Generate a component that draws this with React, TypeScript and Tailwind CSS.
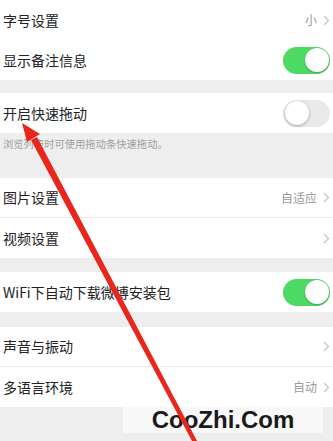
import React from 'react';

const font = { fontFamily: '"Noto Sans CJK SC", "Noto Sans", sans-serif' };

const Chevron = () => (
  <svg width="7" height="11" viewBox="0 0 7 11" className="ml-[6px]">
    <path d="M1 1l4.5 4.5L1 10" fill="none" stroke="#c4c4c8" strokeWidth="1.2" />
  </svg>
);

const Toggle = ({ on }: { on: boolean }) =>
  on ? (
    <div className="w-[47px] h-[27px] rounded-full bg-[#4cd964] flex items-center justify-end px-[1.5px]">
      <div className="w-[24px] h-[24px] rounded-full bg-white shadow-[0_1px_2px_rgba(0,0,0,0.25)]" />
    </div>
  ) : (
    <div className="w-[47px] h-[27px] rounded-full bg-[#e9e9ea] flex items-center px-[1.5px]">
      <div className="w-[24px] h-[24px] rounded-full bg-white shadow-[0_1px_3px_rgba(0,0,0,0.3)]" />
    </div>
  );

const Row = ({
  label,
  value,
  chevron,
  toggle,
  border,
}: {
  label: string;
  value?: string;
  chevron?: boolean;
  toggle?: boolean;
  border?: boolean;
}) => (
  <div className={`h-[40px] bg-white flex items-center pl-[3px] pr-[3px] ${border ? 'border-b border-[#ececec]' : ''}`}>
    <span className="flex-1 text-[14px] text-[#222]">{label}</span>
    {value && <span className="text-[12px] text-[#999]">{value}</span>}
    {chevron && <Chevron />}
    {toggle !== undefined && <Toggle on={toggle} />}
  </div>
);

export default function App() {
  return (
    <div className="relative w-[333px] h-[441px] overflow-hidden bg-[#eeeeee]" style={font}>
      <Row label="字号设置" value="小" chevron />
      <Row label="显示备注信息" toggle={true} />
      <div className="h-[13px]" />
      <Row label="开启快速拖动" toggle={false} />
      <div className="h-[45px] pl-[3px] pt-[3px] text-[10.3px] text-[#a0a0a0]">浏览列表时可使用拖动条快速拖动。</div>
      <Row label="图片设置" value="自适应" chevron border />
      <Row label="视频设置" chevron />
      <div className="h-[14px]" />
      <Row label="WiFi下自动下载微博安装包" toggle={true} />
      <div className="h-[15px]" />
      <Row label="声音与振动" chevron border />
      <Row label="多语言环境" value="自动" chevron />
      <div className="ml-[123px] w-[200px] h-[26px] bg-[#f8f8f8] flex items-center justify-center">
        <span className="text-[24px] font-bold text-[#1a1a1a] leading-none" style={{ fontFamily: '"Liberation Sans", Arial, sans-serif' }}>
          CooZhi.Com
        </span>
      </div>
      <svg className="absolute left-0 top-0 pointer-events-none" width="333" height="441" viewBox="0 0 333 441">
        <polygon points="31,140 37,137 197,441 192,441" fill="#e8261c" />
        <polygon points="22,123 40,134 27,142" fill="#e8261c" />
      </svg>
    </div>
  );
}
